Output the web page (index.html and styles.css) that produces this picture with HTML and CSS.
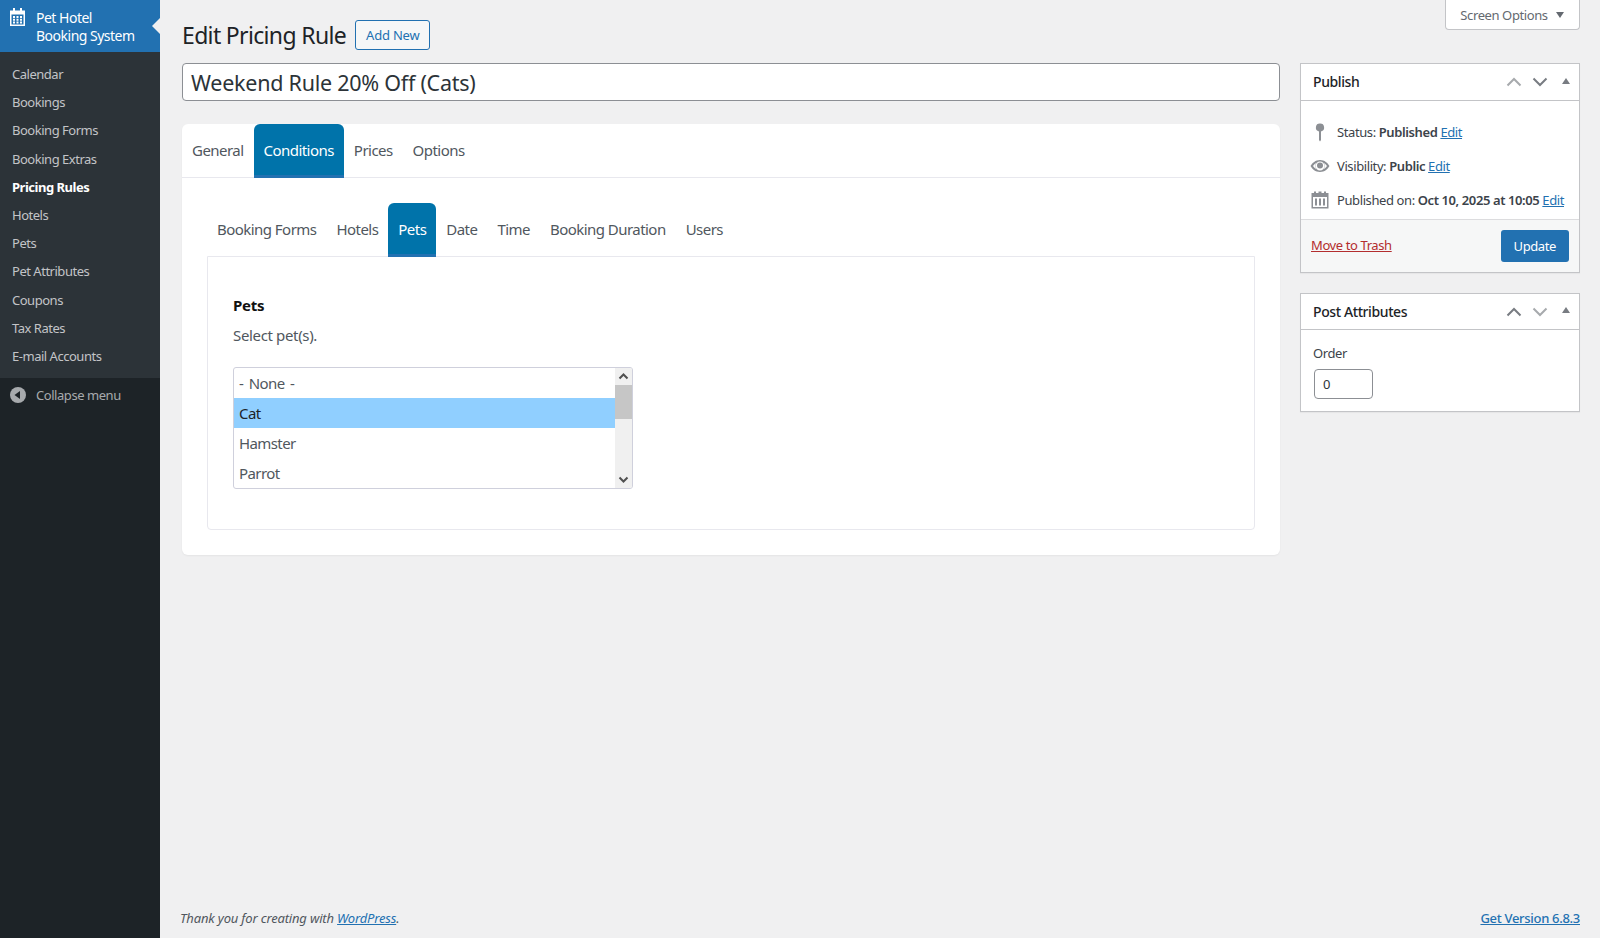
FILE: index.html
```html
<!DOCTYPE html>
<html lang="en">
<head>
<meta charset="utf-8">
<title>Edit Pricing Rule</title>
<link rel="stylesheet" href="styles.css">
</head>
<body>
<aside class="sidebar">
  <div class="brand">
    <svg class="brand-icon" viewBox="0 0 15 18" width="15" height="18"><path fill="currentColor" fill-rule="evenodd" d="M3 0h2v2.500h5V0h2v2.500h3V18H0V2.500h3zM1.500 6.500v10h12v-10zM3 8h2v2H3zM6.500 8h2v2h-2zM10 8h2v2h-2zM3 10.800h2v2H3zM6.500 10.800h2v2h-2zM10 10.800h2v2h-2zM3 13.600h2v2H3zM6.500 13.600h2v2h-2zM10 13.600h2v2h-2z"/></svg>
    <span class="brand-name">Pet Hotel<br>Booking System</span>
    <span class="brand-arrow"></span>
  </div>
  <nav class="menu">
    <a>Calendar</a><a>Bookings</a><a>Booking Forms</a><a>Booking Extras</a>
    <a class="current">Pricing Rules</a>
    <a>Hotels</a><a>Pets</a><a>Pet Attributes</a><a>Coupons</a><a>Tax Rates</a><a>E-mail Accounts</a>
  </nav>
  <div class="collapse">
    <svg viewBox="0 0 16 16" width="16" height="16"><circle cx="8" cy="8" r="8" fill="#a7aaad"/><path d="M10 4v8L4.500 8z" fill="#1d2327"/></svg>
    <span>Collapse menu</span>
  </div>
</aside>
<div class="main">
  <button class="screen-options">Screen Options <i class="tri-down"></i></button>
  <div class="heading">
    <h1>Edit Pricing Rule</h1>
    <a class="add-new">Add New</a>
  </div>
  <div class="columns">
    <div class="content">
      <div class="title-input">Weekend Rule 20% Off (Cats)</div>
      <section class="card">
        <div class="tabs tabs-top">
          <a>General</a><a class="active">Conditions</a><a>Prices</a><a>Options</a>
        </div>
        <div class="card-body">
          <div class="tabs tabs-sub">
            <a>Booking Forms</a><a>Hotels</a><a class="active">Pets</a><a>Date</a><a>Time</a><a>Booking Duration</a><a>Users</a>
          </div>
          <div class="panel">
            <h3>Pets</h3>
            <p>Select pet(s).</p>
            <div class="listbox">
              <ul>
                <li>- None -</li>
                <li class="selected">Cat</li>
                <li>Hamster</li>
                <li>Parrot</li>
              </ul>
              <div class="scrollbar">
                <svg viewBox="0 0 17 17" width="17" height="17"><path d="M4.500 10.500 8.500 6.500l4 4" fill="none" stroke="#505050" stroke-width="2"/></svg>
                <div class="thumb"></div>
                <svg class="down" viewBox="0 0 17 17" width="17" height="17"><path d="M4.500 6.500l4 4 4-4" fill="none" stroke="#505050" stroke-width="2"/></svg>
              </div>
            </div>
          </div>
        </div>
      </section>
    </div>
    <div class="side">
      <section class="box">
        <header class="box-head box-head-tall">
          <h2>Publish</h2>
          <div class="box-controls">
            <svg viewBox="0 0 16 10" width="16" height="10"><path d="M1.500 8.500 8 2l6.500 6.500" fill="none" stroke="#a7aaad" stroke-width="2"/></svg>
            <svg viewBox="0 0 16 10" width="16" height="10"><path d="M1.500 1.500 8 8l6.500-6.500" fill="none" stroke="#787c82" stroke-width="2"/></svg>
            <i class="tri-up"></i>
          </div>
        </header>
        <div class="publish-rows">
          <div class="pub-row">
            <svg viewBox="0 0 20 20" width="20" height="20"><path fill="#8c8f94" d="M10 1.500a4 4 0 0 1 1 7.900V18l-1 1.500L9 18V9.400a4 4 0 0 1 1-7.900z"/></svg>
            <span>Status: <b>Published</b> <a>Edit</a></span>
          </div>
          <div class="pub-row">
            <svg viewBox="0 0 20 20" width="20" height="20"><path fill="#8c8f94" fill-rule="evenodd" d="M10 4c4.500 0 7.800 3 9.500 6-1.700 3-5 6-9.500 6S2.200 13 .5 10C2.200 7 5.500 4 10 4zM10 5.500a4.500 4.500 0 1 0 0 9 4.500 4.500 0 0 0 0-9zM3 10c.9 1.300 2 2.400 3.300 3.200A5.800 5.800 0 0 1 6.300 6.800 10 10 0 0 0 3 10zM13.700 6.800a5.800 5.800 0 0 1 0 6.400A10 10 0 0 0 17 10a10 10 0 0 0-3.300-3.200z"/><circle cx="10" cy="9.500" r="3" fill="#8c8f94"/></svg>
            <span>Visibility: <b>Public</b> <a>Edit</a></span>
          </div>
          <div class="pub-row">
            <svg viewBox="0 0 20 20" width="20" height="20"><path fill="#8c8f94" fill-rule="evenodd" d="M4 1.500h2V3h2.500V1.500h3V3H14V1.500h2V3h2.500v15.500h-17V3H4zM3 7v10h14V7zM5 8.500h2V15.500H5zM9 8.500h2V15.500H9zM13 8.500h2V15.500h-2z"/></svg>
            <span>Published on: <b>Oct 10, 2025 at 10:05</b> <a>Edit</a></span>
          </div>
        </div>
        <footer class="publish-actions">
          <a class="trash">Move to Trash</a>
          <a class="update">Update</a>
        </footer>
      </section>
      <section class="box">
        <header class="box-head">
          <h2>Post Attributes</h2>
          <div class="box-controls">
            <svg viewBox="0 0 16 10" width="16" height="10"><path d="M1.500 8.500 8 2l6.500 6.500" fill="none" stroke="#787c82" stroke-width="2"/></svg>
            <svg viewBox="0 0 16 10" width="16" height="10"><path d="M1.500 1.500 8 8l6.500-6.500" fill="none" stroke="#a7aaad" stroke-width="2"/></svg>
            <i class="tri-up"></i>
          </div>
        </header>
        <div class="attr-body">
          <label>Order</label>
          <div class="order-input">0</div>
        </div>
      </section>
    </div>
  </div>
  <footer class="page-footer">
    <em>Thank you for creating with <a>WordPress</a>.</em>
    <a class="version">Get Version 6.8.3</a>
  </footer>
</div>
</body>
</html>
```

FILE: styles.css
```css
* { box-sizing: border-box; }
html, body { margin: 0; height: 100%; }
body {
  display: flex;
  min-height: 938px;
  background: #f0f0f1;
  color: #3c434a;
  font: 13px/1.4 "Noto Sans", "Open Sans", sans-serif;
  letter-spacing: -0.4px;
  overflow: hidden;
}
a { cursor: pointer; }

/* Sidebar */
.sidebar { width: 160px; flex: none; background: #1d2327; }
.brand {
  position: relative;
  height: 52px;
  display: flex;
  gap: 11px;
  padding: 9px 0 0 10px;
  background: #2271b1;
  color: #fff;
  font-size: 14px;
  line-height: 18px;
  letter-spacing: -0.5px;
}
.brand-icon { flex: none; margin-top: -1px; }
.brand-arrow {
  position: absolute;
  right: 0; top: 18px;
  border: 8px solid transparent;
  border-right-color: #f0f0f1;
  border-left-width: 0;
}
.menu { background: #2c3338; padding: 8px 0; display: flex; flex-direction: column; letter-spacing: -0.48px; }
.menu a { padding: 5px 12px; line-height: 18.2px; color: #c3c4c7; }
.menu a.current { color: #fff; font-weight: 700; }
.collapse {
  display: flex;
  align-items: center;
  gap: 10px;
  padding: 8px 10px;
  color: #a7aaad;
  line-height: 18px;
  letter-spacing: -0.45px;
}

/* Main */
.main { position: relative; flex: 1; min-width: 0; display: flex; flex-direction: column; padding: 0 20px 0 22px; }
.screen-options {
  position: absolute;
  top: 0; right: 20px;
  width: 135px; height: 30px;
  padding: 1px 1px 0 0;
  background: #fff;
  border: 1px solid #c3c4c7;
  border-top: 0;
  border-radius: 0 0 4px 4px;
  color: #646970;
  font: inherit;
  letter-spacing: -0.4px;
}
.tri-down {
  display: inline-block;
  margin-left: 5px;
  vertical-align: 2px;
  border: 4px solid transparent;
  border-top: 6px solid #646970;
  border-bottom: 0;
}
.heading { display: flex; align-items: center; gap: 9px; height: 63px; padding-top: 7px; }
h1 { margin: 0; font-size: 23px; font-weight: 400; line-height: 30px; color: #1d2327; letter-spacing: -0.66px; }
.add-new {
  height: 30px;
  padding: 0 10px;
  border: 1px solid #2271b1;
  border-radius: 3px;
  background: #f6f7f7;
  color: #2271b1;
  line-height: 28px;
  letter-spacing: -0.2px;
}
.columns { display: flex; gap: 20px; align-items: flex-start; }
.content { flex: 1; min-width: 0; }
.side { width: 280px; flex: none; display: flex; flex-direction: column; gap: 20px; }

.title-input {
  height: 38px;
  padding: 0 8px;
  background: #fff;
  border: 1px solid #8c8f94;
  border-radius: 4px;
  color: #2c3338;
  font-size: 21.500px;
  line-height: 38px;
  letter-spacing: -0.25px;
}

/* Card + tabs */
.card { margin-top: 23px; background: #fff; border-radius: 6px; box-shadow: 0 1px 2px rgba(0,0,0,.05); }
.tabs { display: flex; font-size: 15px; letter-spacing: -0.54px; }
.tabs a { height: 53px; padding: 0 10px; line-height: 53px; color: #50575e; }
.tabs a.active {
  height: 54px;
  margin-bottom: -1px;
  position: relative;
  background: #0073aa;
  color: #fff;
  border-radius: 6px 6px 0 0;
  border-bottom: 3px solid #2271b1;
}
.tabs-top { height: 54px; box-shadow: inset 0 -1px #e8e8ee; }
.card-body { padding: 25px; }
.panel {
  height: 274px;
  padding: 38px 25px;
  border: 1px solid #e8e8ee;
  border-radius: 0 0 4px 4px;
}
.panel h3 { margin: 0; font-size: 15px; line-height: 20px; color: #111; font-weight: 700; letter-spacing: -0.3px; }
.panel p { margin: 10px 0 22px; font-size: 15px; line-height: 20px; color: #50575e; letter-spacing: -0.35px; }

/* Listbox */
.listbox {
  display: flex;
  width: 400px;
  height: 122px;
  border: 1px solid #cfd0dc;
  border-radius: 3px;
  overflow: hidden;
}
.listbox ul { flex: 1; margin: 0; padding: 0; list-style: none; font-size: 15px; color: #50575e; letter-spacing: -0.6px; word-spacing: 2.2px; }
.listbox li { height: 30px; padding: 0 5px; line-height: 30px; }
.listbox li.selected { background: #90cfff; color: #1d2327; }
.scrollbar { width: 17px; flex: none; background: #f0f0f0; display: flex; flex-direction: column; }
.thumb { height: 34px; background: #c6c6c6; }
.scrollbar .down { margin-top: auto; }

/* Meta boxes */
.box { background: #fff; border: 1px solid #c3c4c7; box-shadow: 0 1px 1px rgba(0,0,0,.04); }
.box-head {
  display: flex;
  align-items: center;
  justify-content: space-between;
  height: 36px;
  padding: 0 9px 0 12px;
  border-bottom: 1px solid #c3c4c7;
}
.box-head-tall { height: 37px; }
.box-head h2 { margin: 0; font-size: 14px; font-weight: 500; color: #1d2327; letter-spacing: -0.4px; }
.box-controls { display: flex; align-items: center; gap: 10px; }
.tri-up {
  margin-left: 4px;
  border: 4px solid transparent;
  border-bottom: 6px solid #787c82;
  border-top: 0;
  margin-top: -3px;
}
.publish-rows { padding: 14px 0 2px; }
.pub-row { display: flex; align-items: center; gap: 7px; height: 34px; padding-left: 9px; }
.pub-row b { font-weight: 600; color: #3c434a; }
.pub-row a, .page-footer a { color: #2271b1; text-decoration: underline; }
.publish-actions {
  display: flex;
  align-items: center;
  justify-content: space-between;
  height: 53px;
  padding: 0 10px;
  background: #f6f7f7;
  border-top: 1px solid #dcdcde;
}
.trash { color: #b32d2e; text-decoration: underline; margin-top: -2px; }
.update {
  height: 32px;
  padding: 0 13px;
  border-radius: 3px;
  background: #2271b1;
  color: #fff;
  line-height: 32px;
}
.attr-body { padding: 13px 12px 12px; }
.attr-body label { display: block; line-height: 20px; }
.order-input {
  width: 59px;
  height: 30px;
  margin: 6px 0 0 1px;
  padding-left: 8px;
  border: 1px solid #8c8f94;
  border-radius: 4px;
  color: #2c3338;
  line-height: 28px;
  background: #fff;
}

/* Footer */
.page-footer {
  display: flex;
  justify-content: space-between;
  margin-top: auto;
  padding-bottom: 11px;
  color: #50575e;
  line-height: 18px;
  letter-spacing: -0.17px;
}
.page-footer em { margin-left: -2px; }
.page-footer .version { font-weight: 500; letter-spacing: -0.3px; }
```
